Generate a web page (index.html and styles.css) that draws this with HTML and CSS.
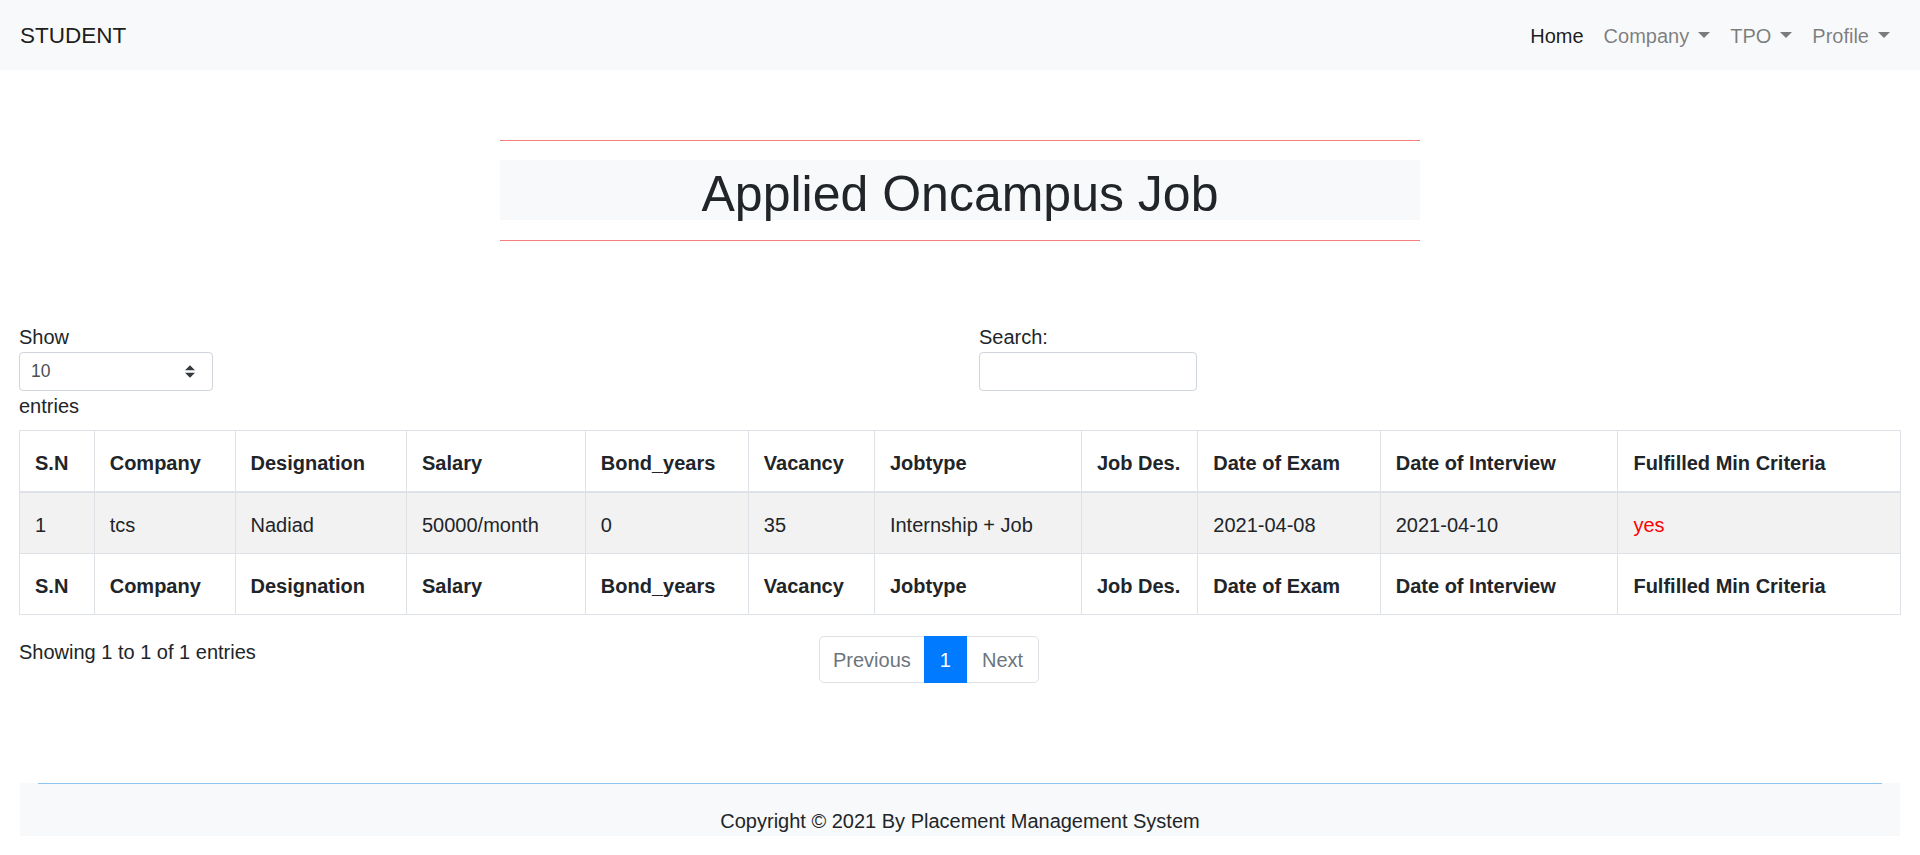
FILE: index.html
```html
<!DOCTYPE html>
<html lang="en">
<head>
<meta charset="utf-8">
<title>Applied Oncampus Job</title>
<link rel="stylesheet" href="styles.css">
</head>
<body>
<nav class="navbar">
  <a class="brand" href="#">STUDENT</a>
  <ul class="nav">
    <li><a class="nav-link active" href="#">Home</a></li>
    <li><a class="nav-link" href="#">Company<span class="caret"></span></a></li>
    <li><a class="nav-link" href="#">TPO<span class="caret"></span></a></li>
    <li><a class="nav-link" href="#">Profile<span class="caret"></span></a></li>
  </ul>
</nav>

<div class="title-wrap">
  <hr class="title-rule">
  <h1 class="title">Applied Oncampus Job</h1>
  <hr class="title-rule">
</div>

<section class="dt">
  <div class="dt-row">
    <div class="dt-col">
      <div class="label">Show</div>
      <div class="select">
        <span>10</span>
        <svg class="select-arrow" width="10" height="13" viewBox="0 0 4 5"><path d="M2 0L0 2h4zm0 5L0 3h4z" fill="#343a40"/></svg>
      </div>
      <div class="label">entries</div>
    </div>
    <div class="dt-col">
      <div class="label">Search:</div>
      <div class="search"></div>
    </div>
  </div>

  <div class="table-wrap">
    <table class="table">
      <colgroup>
        <col class="c1"><col class="c2"><col class="c3"><col class="c4"><col class="c5"><col class="c6"><col class="c7"><col class="c8"><col class="c9"><col class="c10"><col class="c11">
      </colgroup>
      <thead>
        <tr>
          <th>S.N</th><th>Company</th><th>Designation</th><th>Salary</th><th>Bond_years</th><th>Vacancy</th><th>Jobtype</th><th>Job Des.</th><th>Date of Exam</th><th>Date of Interview</th><th>Fulfilled Min Criteria</th>
        </tr>
      </thead>
      <tbody>
        <tr>
          <td>1</td><td>tcs</td><td>Nadiad</td><td>50000/month</td><td>0</td><td>35</td><td>Internship + Job</td><td></td><td>2021-04-08</td><td>2021-04-10</td><td><span class="yes">yes</span></td>
        </tr>
      </tbody>
      <tfoot>
        <tr>
          <th>S.N</th><th>Company</th><th>Designation</th><th>Salary</th><th>Bond_years</th><th>Vacancy</th><th>Jobtype</th><th>Job Des.</th><th>Date of Exam</th><th>Date of Interview</th><th>Fulfilled Min Criteria</th>
        </tr>
      </tfoot>
    </table>
  </div>

  <div class="dt-row dt-bottom">
    <div class="dt-col info">Showing 1 to 1 of 1 entries</div>
    <div class="dt-col">
      <ul class="pagination">
        <li class="page-item disabled first"><a class="page-link prev" href="#">Previous</a></li>
        <li class="page-item active"><a class="page-link" href="#">1</a></li>
        <li class="page-item disabled last"><a class="page-link" href="#">Next</a></li>
      </ul>
    </div>
  </div>
</section>

<footer class="footer">
  <hr class="footer-rule">
  <p class="copyright">Copyright &copy; 2021 By Placement Management System</p>
</footer>
</body>
</html>
```

FILE: styles.css
```css
* { box-sizing: border-box; }

html, body {
  margin: 0;
  padding: 0;
}

body {
  font-family: "Liberation Sans", Arial, sans-serif;
  font-size: 20px;
  line-height: 1.5;
  color: #212529;
  background: #fff;
}

a { text-decoration: none; }

/* Navbar */
.navbar {
  display: flex;
  align-items: center;
  justify-content: space-between;
  height: 70px;
  padding: 2px 20px 0;
  background: #f8f9fa;
}

.brand {
  font-size: 22.5px;
  line-height: 37.5px;
  color: rgba(0, 0, 0, 0.9);
}

.nav {
  display: flex;
  list-style: none;
  margin: 0;
  padding: 0;
}

.nav-link {
  display: block;
  padding: 10px;
  color: rgba(0, 0, 0, 0.5);
}

.nav-link.active { color: rgba(0, 0, 0, 0.9); }

.caret {
  display: inline-block;
  margin-left: 0.45em;
  vertical-align: 0.255em;
  border-top: 0.3em solid;
  border-right: 0.3em solid transparent;
  border-left: 0.3em solid transparent;
}

/* Title */
.title-wrap {
  width: 920px;
  margin: 70px auto 0;
}

.title-rule {
  margin: 0;
  border: 0;
  border-top: 1px solid #f47d7d;
}

.title {
  margin: 19px 0 20px;
  height: 60px;
  font-size: 50px;
  font-weight: 500;
  line-height: 68px;
  text-align: center;
  background: #f8f9fa;
}

/* DataTable */
.dt { margin-top: 81px; }

.dt-row {
  display: grid;
  grid-template-columns: 1fr 1fr;
}

.dt-col { padding: 0 19px; }

.label { line-height: 30px; }

.select {
  display: flex;
  align-items: center;
  justify-content: space-between;
  width: 194px;
  height: 39px;
  padding: 0 17px 0 11px;
  border: 1px solid #ced4da;
  border-radius: 4px;
  font-size: 17.5px;
  color: #495057;
}

.search {
  width: 218px;
  height: 39px;
  border: 1px solid #ced4da;
  border-radius: 4px;
}

.table-wrap {
  padding: 0 19px;
  margin-top: 9px;
}

.table {
  width: 100%;
  table-layout: fixed;
  border-collapse: collapse;
  margin-bottom: 20px;
}

.c1 { width: 74.7px; }
.c2 { width: 140.8px; }
.c3 { width: 171.4px; }
.c4 { width: 178.8px; }
.c5 { width: 162.9px; }
.c6 { width: 126.1px; }
.c7 { width: 206.9px; }
.c8 { width: 116.4px; }
.c9 { width: 182.4px; }
.c10 { width: 237.6px; }
.c11 { width: 282.4px; }

.table th,
.table td {
  padding: 17px 12px 13px 15px;
  border: 1px solid #dee2e6;
  text-align: left;
  white-space: nowrap;
  overflow: hidden;
  height: 60px;
}

.table th { font-weight: bold; }

.table thead th { border-bottom: 2px solid #dee2e6; }

.table tbody tr { background: #f2f2f2; }

.yes { color: #ff0000; }

/* Bottom row */
.dt-bottom { grid-template-columns: 5fr 7fr; }

.info {
  line-height: 30px;
  padding-top: 2px;
}

.pagination {
  display: flex;
  list-style: none;
  margin: 1px 0 0;
  padding: 0;
}

.page-link {
  display: block;
  padding: 11px 15px 9px;
  line-height: 25px;
  color: #6c757d;
  background: #fff;
  border: 1px solid #dee2e6;
  margin-left: -1px;
}

.page-link.prev { padding-left: 13px; padding-right: 13px; }

.first .page-link {
  margin-left: 0;
  border-radius: 5px 0 0 5px;
}

.last .page-link { border-radius: 0 5px 5px 0; }

.active .page-link {
  position: relative;
  color: #fff;
  background: #007bff;
  border-color: #007bff;
}

/* Footer */
.footer {
  margin: 100px 20px 0;
  background: #f8f9fa;
}

.footer-rule {
  margin: 0 18px;
  border: 0;
  border-top: 1px solid #8ec5ee;
}

.copyright {
  margin: 22px 0 0;
  line-height: 30px;
  text-align: center;
}
```
